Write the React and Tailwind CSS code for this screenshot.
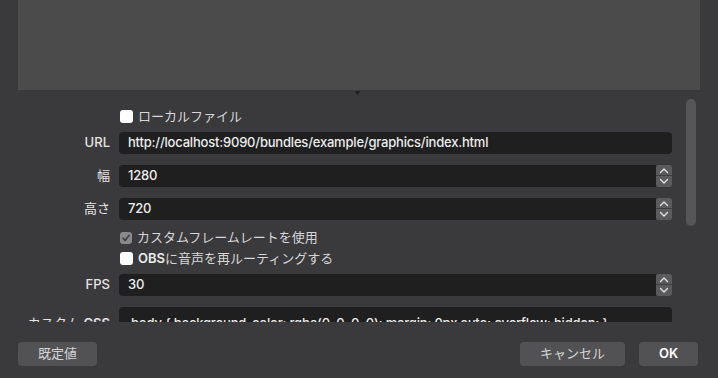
import React from 'react';

const font = "font-['Inter','Noto_Sans_CJK_JP',sans-serif]";

const Checkbox = ({ checked, label }) => (
  <div className="flex h-[21px] items-center pl-[120px]">
    {checked ? (
      <span className="flex h-[12px] w-[12px] items-center justify-center rounded-[3px] bg-[#8a8a8c]">
        <svg width="10" height="10" viewBox="0 0 10 10">
          <path d="M2 5.2 L4.1 7.4 L8 2.4" fill="none" stroke="#3c3c3e" strokeWidth="1.6" strokeLinecap="round" strokeLinejoin="round" />
        </svg>
      </span>
    ) : (
      <span className="h-[13px] w-[13px] rounded-[3px] bg-white" />
    )}
    <span className="ml-[5px] text-[13px] text-[#d6d6d6]">{label}</span>
  </div>
);

const Stepper = () => (
  <div className="flex h-[22px] w-[16px] shrink-0 flex-col overflow-hidden rounded-[3px] bg-[#5b5b5d]">
    <div className="flex h-[11px] items-center justify-center border-b border-[#3e3e40]">
      <svg width="10" height="7" viewBox="0 0 10 7">
        <path d="M1.5 5.5 L5 2 L8.5 5.5" fill="none" stroke="#e2e2e2" strokeWidth="1.4" strokeLinecap="round" strokeLinejoin="round" />
      </svg>
    </div>
    <div className="flex h-[11px] items-center justify-center">
      <svg width="10" height="7" viewBox="0 0 10 7">
        <path d="M1.5 1.5 L5 5 L8.5 1.5" fill="none" stroke="#e2e2e2" strokeWidth="1.4" strokeLinecap="round" strokeLinejoin="round" />
      </svg>
    </div>
  </div>
);

const Field = ({ label, value, spin, className = '', labelClass = 'font-medium' }) => (
  <div className={`flex items-center ${className}`}>
    <div className={`w-[110px] shrink-0 text-right text-[13px] text-[#e4e4e4] ${labelClass}`}>{label}</div>
    <div className="ml-[9px] flex w-[553px]">
      <div className={`flex h-[22px] flex-1 items-center bg-[#1f1f1f] px-[9px] text-[13px] font-medium tracking-[-0.2px] text-[#ececec] ${spin ? 'rounded-l-[4px]' : 'rounded-[4px]'}`}>
        {value}
      </div>
      {spin && <Stepper />}
    </div>
  </div>
);

const Button = ({ children, className = '' }) => (
  <button className={`flex h-[24px] items-center justify-center rounded-[4px] bg-[#525254] text-[13px] ${className}`}>
    {children}
  </button>
);

export default function App() {
  return (
    <div className={`relative flex h-[378px] w-[718px] flex-col overflow-hidden bg-[#3a393c] ${font}`}>
      <div className="mx-[18px] h-[90px] shrink-0 bg-[#4b4b4b]" />

      {/* splitter handle */}
      <div className="relative h-[7px] shrink-0">
        <svg className="absolute left-[354px] top-[0px]" width="7" height="6" viewBox="0 0 7 6">
          <path d="M0.5 1 H6.5 L4 5 H3 Z" fill="#232325" />
        </svg>
      </div>

      <div className="flex h-[225px] shrink-0">
        <div className="w-[686px] overflow-hidden pt-[9px]">
          <Checkbox label="ローカルファイル" />
          <Field className="mt-[5px]" label="URL" value="http://localhost:9090/bundles/example/graphics/index.html" />
          <Field className="mt-[11px]" label="幅" labelClass="" value="1280" spin />
          <Field className="mt-[11px]" label="高さ" labelClass="" value="720" spin />
          <div className="mt-[7px]">
            <Checkbox checked label="カスタムフレームレートを使用" />
            <Checkbox label={<><span className="font-semibold text-[#ececec]">OBS</span>に音声を再ルーティングする</>} />
          </div>
          <Field className="mt-[5px]" label="FPS" value="30" spin />
          <div className="mt-[11px] flex">
            <div className="w-[110px] shrink-0 pt-[7px] text-right text-[13px] text-[#e4e4e4] whitespace-nowrap">
              カスタム <span className="font-semibold">CSS</span>
            </div>
            <div className="ml-[9px] h-[40px] w-[553px] overflow-hidden whitespace-nowrap rounded-[4px] bg-[#1f1f1f] px-[12px] pt-[7px] text-[13px] font-medium tracking-[-0.2px] text-[#ececec]">
              body {'{'} background-color: rgba(0, 0, 0, 0); margin: 0px auto; overflow: hidden; {'}'}
            </div>
          </div>
        </div>
        <div className="pt-[2px]">
          <div className="h-[127px] w-[10px] rounded-full bg-[#565658]" />
        </div>
      </div>

      <div className="flex items-center pl-[18px] pr-[20px] pt-[20px]">
        <Button className="w-[79px] text-[#d4d4d4]">既定値</Button>
        <div className="flex-1" />
        <Button className="w-[105px] text-[#d4d4d4]">キャンセル</Button>
        <Button className="ml-[14px] w-[59px] font-semibold text-white">OK</Button>
      </div>
    </div>
  );
}
